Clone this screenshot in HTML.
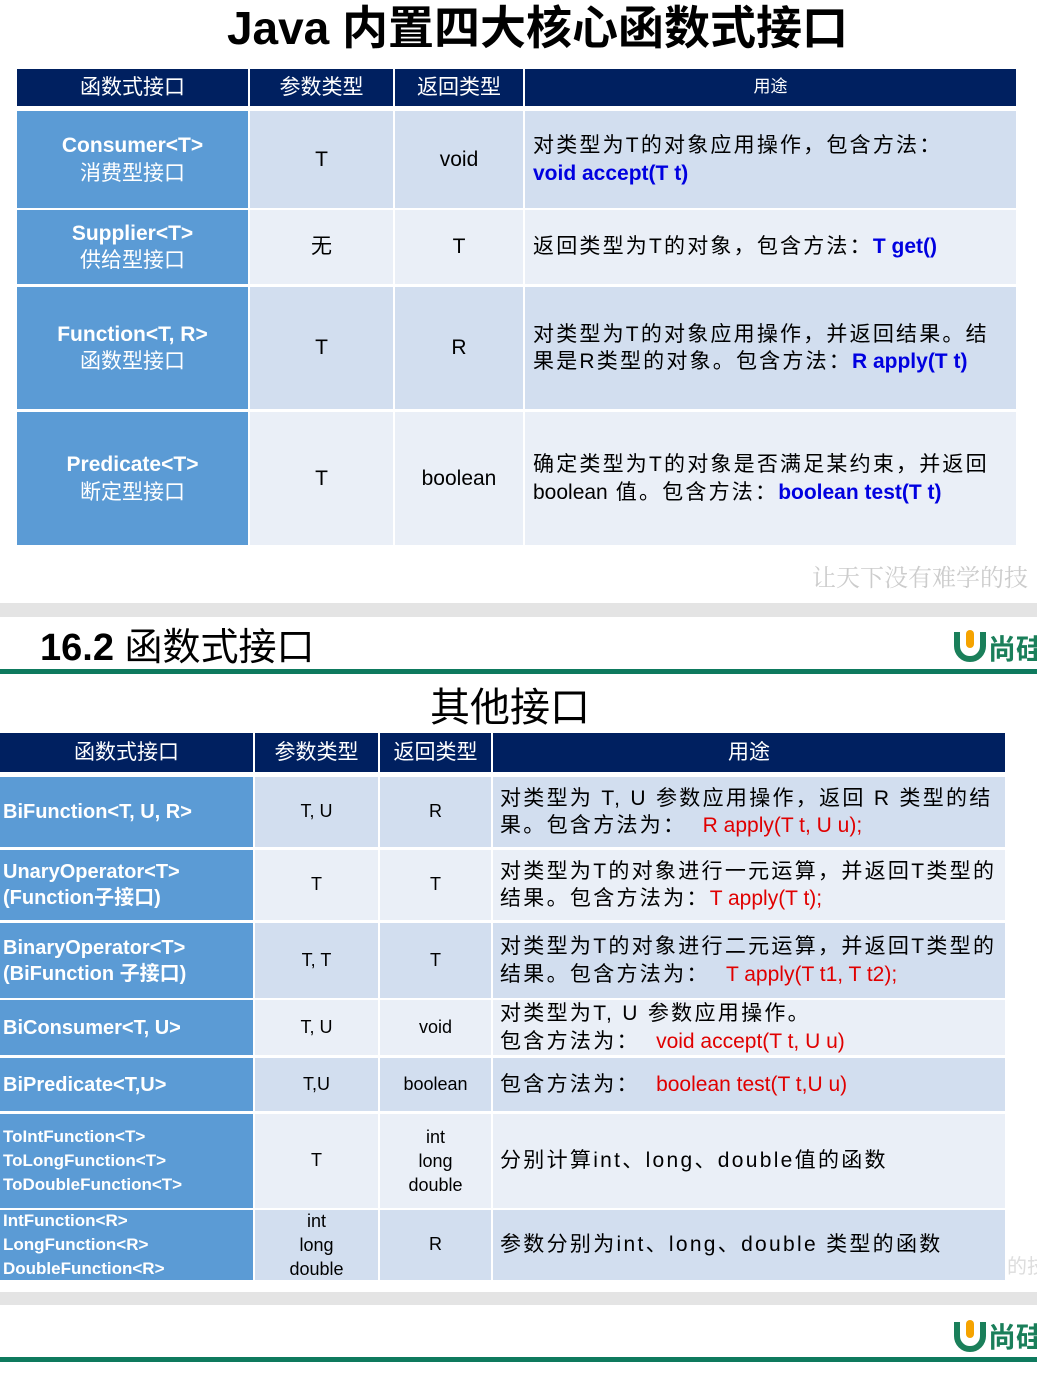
<!DOCTYPE html>
<html><head><meta charset="utf-8"><style>
*{margin:0;padding:0;box-sizing:border-box}
body{width:1037px;height:1373px;position:relative;background:#fff;overflow:hidden;font-family:"Liberation Sans","Noto Sans CJK SC",sans-serif;color:#000}
.c{position:absolute;display:flex;align-items:center;justify-content:center;text-align:center;line-height:1.3}
.c>div{width:100%}
.h{background:#002060;color:#fff;font-size:21px}
.f{background:#5b9bd5;color:#fff;font-weight:bold;font-size:20px}
.f1{font-size:21px}
.a{background:#d2deef}.b{background:#eaeff7}
.l{text-align:left;padding-left:8px;padding-right:0}
.l>div{text-align:left;white-space:nowrap}
.ls{letter-spacing:2.2px}
.ls2{letter-spacing:2.3px}
.bl{color:#0000e0;font-weight:bold;letter-spacing:0}
.rd{color:#e00000;letter-spacing:0}
.t1{font-size:21px}
.t2{font-size:21px}
.sm{font-size:18px}
</style></head><body>
<div class="c" style="left:0;top:2px;width:1075px;height:54px;font-size:46px;font-weight:bold"><div>Java 内置四大核心函数式接口</div></div>

<div class="c h" style="left:17px;top:69px;width:231px;height:37px"><div>函数式接口</div></div>
<div class="c h" style="left:250px;top:69px;width:143px;height:37px"><div>参数类型</div></div>
<div class="c h" style="left:395px;top:69px;width:128px;height:37px"><div>返回类型</div></div>
<div class="c h" style="left:525px;top:69px;width:491px;height:37px;font-size:17px"><div>用途</div></div>

<div class="c f f1" style="left:17px;top:111px;width:231px;height:97px"><div>Consumer&lt;T&gt;<br><span style="font-weight:normal">消费型接口</span></div></div>
<div class="c a t1" style="left:250px;top:111px;width:143px;height:97px"><div>T</div></div>
<div class="c a t1" style="left:395px;top:111px;width:128px;height:97px"><div>void</div></div>
<div class="c a t1 l ls" style="left:525px;top:111px;width:491px;height:97px"><div>对类型为T的对象应用操作，包含方法：<br><span class="bl">void accept(T t)</span></div></div>

<div class="c f f1" style="left:17px;top:210px;width:231px;height:74px"><div>Supplier&lt;T&gt;<br><span style="font-weight:normal">供给型接口</span></div></div>
<div class="c b t1" style="left:250px;top:210px;width:143px;height:74px"><div>无</div></div>
<div class="c b t1" style="left:395px;top:210px;width:128px;height:74px"><div>T</div></div>
<div class="c b t1 l ls" style="left:525px;top:210px;width:491px;height:74px"><div>返回类型为T的对象，包含方法：<span class="bl">T get()</span></div></div>

<div class="c f f1" style="left:17px;top:287px;width:231px;height:122px"><div>Function&lt;T, R&gt;<br><span style="font-weight:normal">函数型接口</span></div></div>
<div class="c a t1" style="left:250px;top:287px;width:143px;height:122px"><div>T</div></div>
<div class="c a t1" style="left:395px;top:287px;width:128px;height:122px"><div>R</div></div>
<div class="c a t1 l ls" style="left:525px;top:287px;width:491px;height:122px"><div>对类型为T的对象应用操作，并返回结果。结<br>果是R类型的对象。包含方法：<span class="bl">R apply(T t)</span></div></div>

<div class="c f f1" style="left:17px;top:412px;width:231px;height:133px"><div>Predicate&lt;T&gt;<br><span style="font-weight:normal">断定型接口</span></div></div>
<div class="c b t1" style="left:250px;top:412px;width:143px;height:133px"><div>T</div></div>
<div class="c b t1" style="left:395px;top:412px;width:128px;height:133px"><div>boolean</div></div>
<div class="c b t1 l ls" style="left:525px;top:412px;width:491px;height:133px"><div>确定类型为T的对象是否满足某约束，并返回<br><span style="letter-spacing:0">boolean</span> 值。包含方法：<span class="bl">boolean test(T t)</span></div></div>

<div style="position:absolute;left:812px;top:558px;font-size:24px;color:#ccc;font-family:'Noto Serif CJK SC',serif;white-space:nowrap">让天下没有难学的技</div>

<div style="position:absolute;left:0;top:603px;width:1037px;height:14px;background:#e4e4e4"></div>

<div style="position:absolute;left:40px;top:627px;font-size:38px;line-height:42px;font-weight:bold;white-space:nowrap">16.2 <span style="font-weight:normal">函数式接口</span></div>
<svg style="position:absolute;left:952px;top:626px" width="36" height="36" viewBox="0 0 36 36"><path d="M5 6 V20 A13 13 0 0 0 31 20 V6" fill="none" stroke="#1a7f5a" stroke-width="6"/><rect x="14" y="4" width="8" height="18" rx="4" fill="#f5a300"/></svg>
<div style="position:absolute;left:988px;top:628px;font-size:28px;color:#1a7f5a;font-weight:bold;white-space:nowrap">尚硅</div>
<div style="position:absolute;left:0;top:669px;width:1037px;height:5px;background:#0e7a5e"></div>

<div class="c" style="left:0;top:684px;width:1020px;height:48px;font-size:40px"><div>其他接口</div></div>

<div class="c h" style="left:0;top:733px;width:253px;height:39px"><div>函数式接口</div></div>
<div class="c h" style="left:255px;top:733px;width:123px;height:39px"><div>参数类型</div></div>
<div class="c h" style="left:380px;top:733px;width:111px;height:39px"><div>返回类型</div></div>
<div class="c h" style="left:493px;top:733px;width:512px;height:39px"><div>用途</div></div>

<div class="c f l" style="left:0;top:777px;width:253px;height:70px;padding-left:3px"><div>BiFunction&lt;T, U, R&gt;</div></div>
<div class="c a sm" style="left:255px;top:777px;width:123px;height:70px"><div>T, U</div></div>
<div class="c a sm" style="left:380px;top:777px;width:111px;height:70px"><div>R</div></div>
<div class="c a t2 l ls2" style="left:493px;top:777px;width:512px;height:70px;padding-left:7px"><div>对类型为 T, U 参数应用操作，返回 R 类型的结<br>果。包含方法为： &nbsp;<span class="rd">R apply(T t, U u);</span></div></div>

<div class="c f l" style="left:0;top:850px;width:253px;height:70px;padding-left:3px"><div>UnaryOperator&lt;T&gt;<br>(Function子接口)</div></div>
<div class="c b sm" style="left:255px;top:850px;width:123px;height:70px"><div>T</div></div>
<div class="c b sm" style="left:380px;top:850px;width:111px;height:70px"><div>T</div></div>
<div class="c b t2 l ls2" style="left:493px;top:850px;width:512px;height:70px;padding-left:7px"><div>对类型为T的对象进行一元运算，并返回T类型的<br>结果。包含方法为：<span class="rd">T apply(T t);</span></div></div>

<div class="c f l" style="left:0;top:923px;width:253px;height:75px;padding-left:3px"><div>BinaryOperator&lt;T&gt;<br>(BiFunction 子接口)</div></div>
<div class="c a sm" style="left:255px;top:923px;width:123px;height:75px"><div>T, T</div></div>
<div class="c a sm" style="left:380px;top:923px;width:111px;height:75px"><div>T</div></div>
<div class="c a t2 l ls2" style="left:493px;top:923px;width:512px;height:75px;padding-left:7px"><div>对类型为T的对象进行二元运算，并返回T类型的<br>结果。包含方法为： &nbsp;<span class="rd">T apply(T t1, T t2);</span></div></div>

<div class="c f l" style="left:0;top:1000px;width:253px;height:55px;padding-left:3px"><div>BiConsumer&lt;T, U&gt;</div></div>
<div class="c b sm" style="left:255px;top:1000px;width:123px;height:55px"><div>T, U</div></div>
<div class="c b sm" style="left:380px;top:1000px;width:111px;height:55px"><div>void</div></div>
<div class="c b t2 l ls2" style="left:493px;top:1000px;width:512px;height:55px;padding-left:7px"><div>对类型为T, U 参数应用操作。<br>包含方法为： &nbsp;<span class="rd">void accept(T t, U u)</span></div></div>

<div class="c f l" style="left:0;top:1058px;width:253px;height:53px;padding-left:3px"><div>BiPredicate&lt;T,U&gt;</div></div>
<div class="c a sm" style="left:255px;top:1058px;width:123px;height:53px"><div>T,U</div></div>
<div class="c a sm" style="left:380px;top:1058px;width:111px;height:53px"><div>boolean</div></div>
<div class="c a t2 l ls2" style="left:493px;top:1058px;width:512px;height:53px;padding-left:7px"><div>包含方法为： &nbsp;<span class="rd">boolean test(T t,U u)</span></div></div>

<div class="c f l" style="left:0;top:1114px;width:253px;height:94px;padding-left:3px;font-size:17px;line-height:24px"><div>ToIntFunction&lt;T&gt;<br>ToLongFunction&lt;T&gt;<br>ToDoubleFunction&lt;T&gt;</div></div>
<div class="c b sm" style="left:255px;top:1114px;width:123px;height:94px"><div>T</div></div>
<div class="c b sm" style="left:380px;top:1114px;width:111px;height:94px;line-height:24px"><div>int<br>long<br>double</div></div>
<div class="c b t2 l ls2" style="left:493px;top:1114px;width:512px;height:94px;padding-left:7px"><div>分别计算int、long、double值的函数</div></div>

<div class="c f l" style="left:0;top:1210px;width:253px;height:70px;padding-left:3px;font-size:17px;line-height:24px"><div>IntFunction&lt;R&gt;<br>LongFunction&lt;R&gt;<br>DoubleFunction&lt;R&gt;</div></div>
<div class="c a sm" style="left:255px;top:1210px;width:123px;height:70px;line-height:24px"><div>int<br>long<br>double</div></div>
<div class="c a sm" style="left:380px;top:1210px;width:111px;height:70px"><div>R</div></div>
<div class="c a t2 l ls2" style="left:493px;top:1210px;width:512px;height:70px;padding-left:7px"><div>参数分别为int、long、double 类型的函数</div></div>

<div style="position:absolute;left:1007px;top:1250px;font-size:20px;color:#ddd;white-space:nowrap">的技</div>

<div style="position:absolute;left:0;top:1292px;width:1037px;height:13px;background:#e4e4e4"></div>
<svg style="position:absolute;left:952px;top:1316px" width="36" height="36" viewBox="0 0 36 36"><path d="M5 6 V20 A13 13 0 0 0 31 20 V6" fill="none" stroke="#1a7f5a" stroke-width="6"/><rect x="14" y="4" width="8" height="18" rx="4" fill="#f5a300"/></svg>
<div style="position:absolute;left:988px;top:1316px;font-size:28px;color:#1a7f5a;font-weight:bold;white-space:nowrap">尚硅</div>
<div style="position:absolute;left:0;top:1357px;width:1037px;height:5px;background:#0e7a5e"></div>
</body></html>
